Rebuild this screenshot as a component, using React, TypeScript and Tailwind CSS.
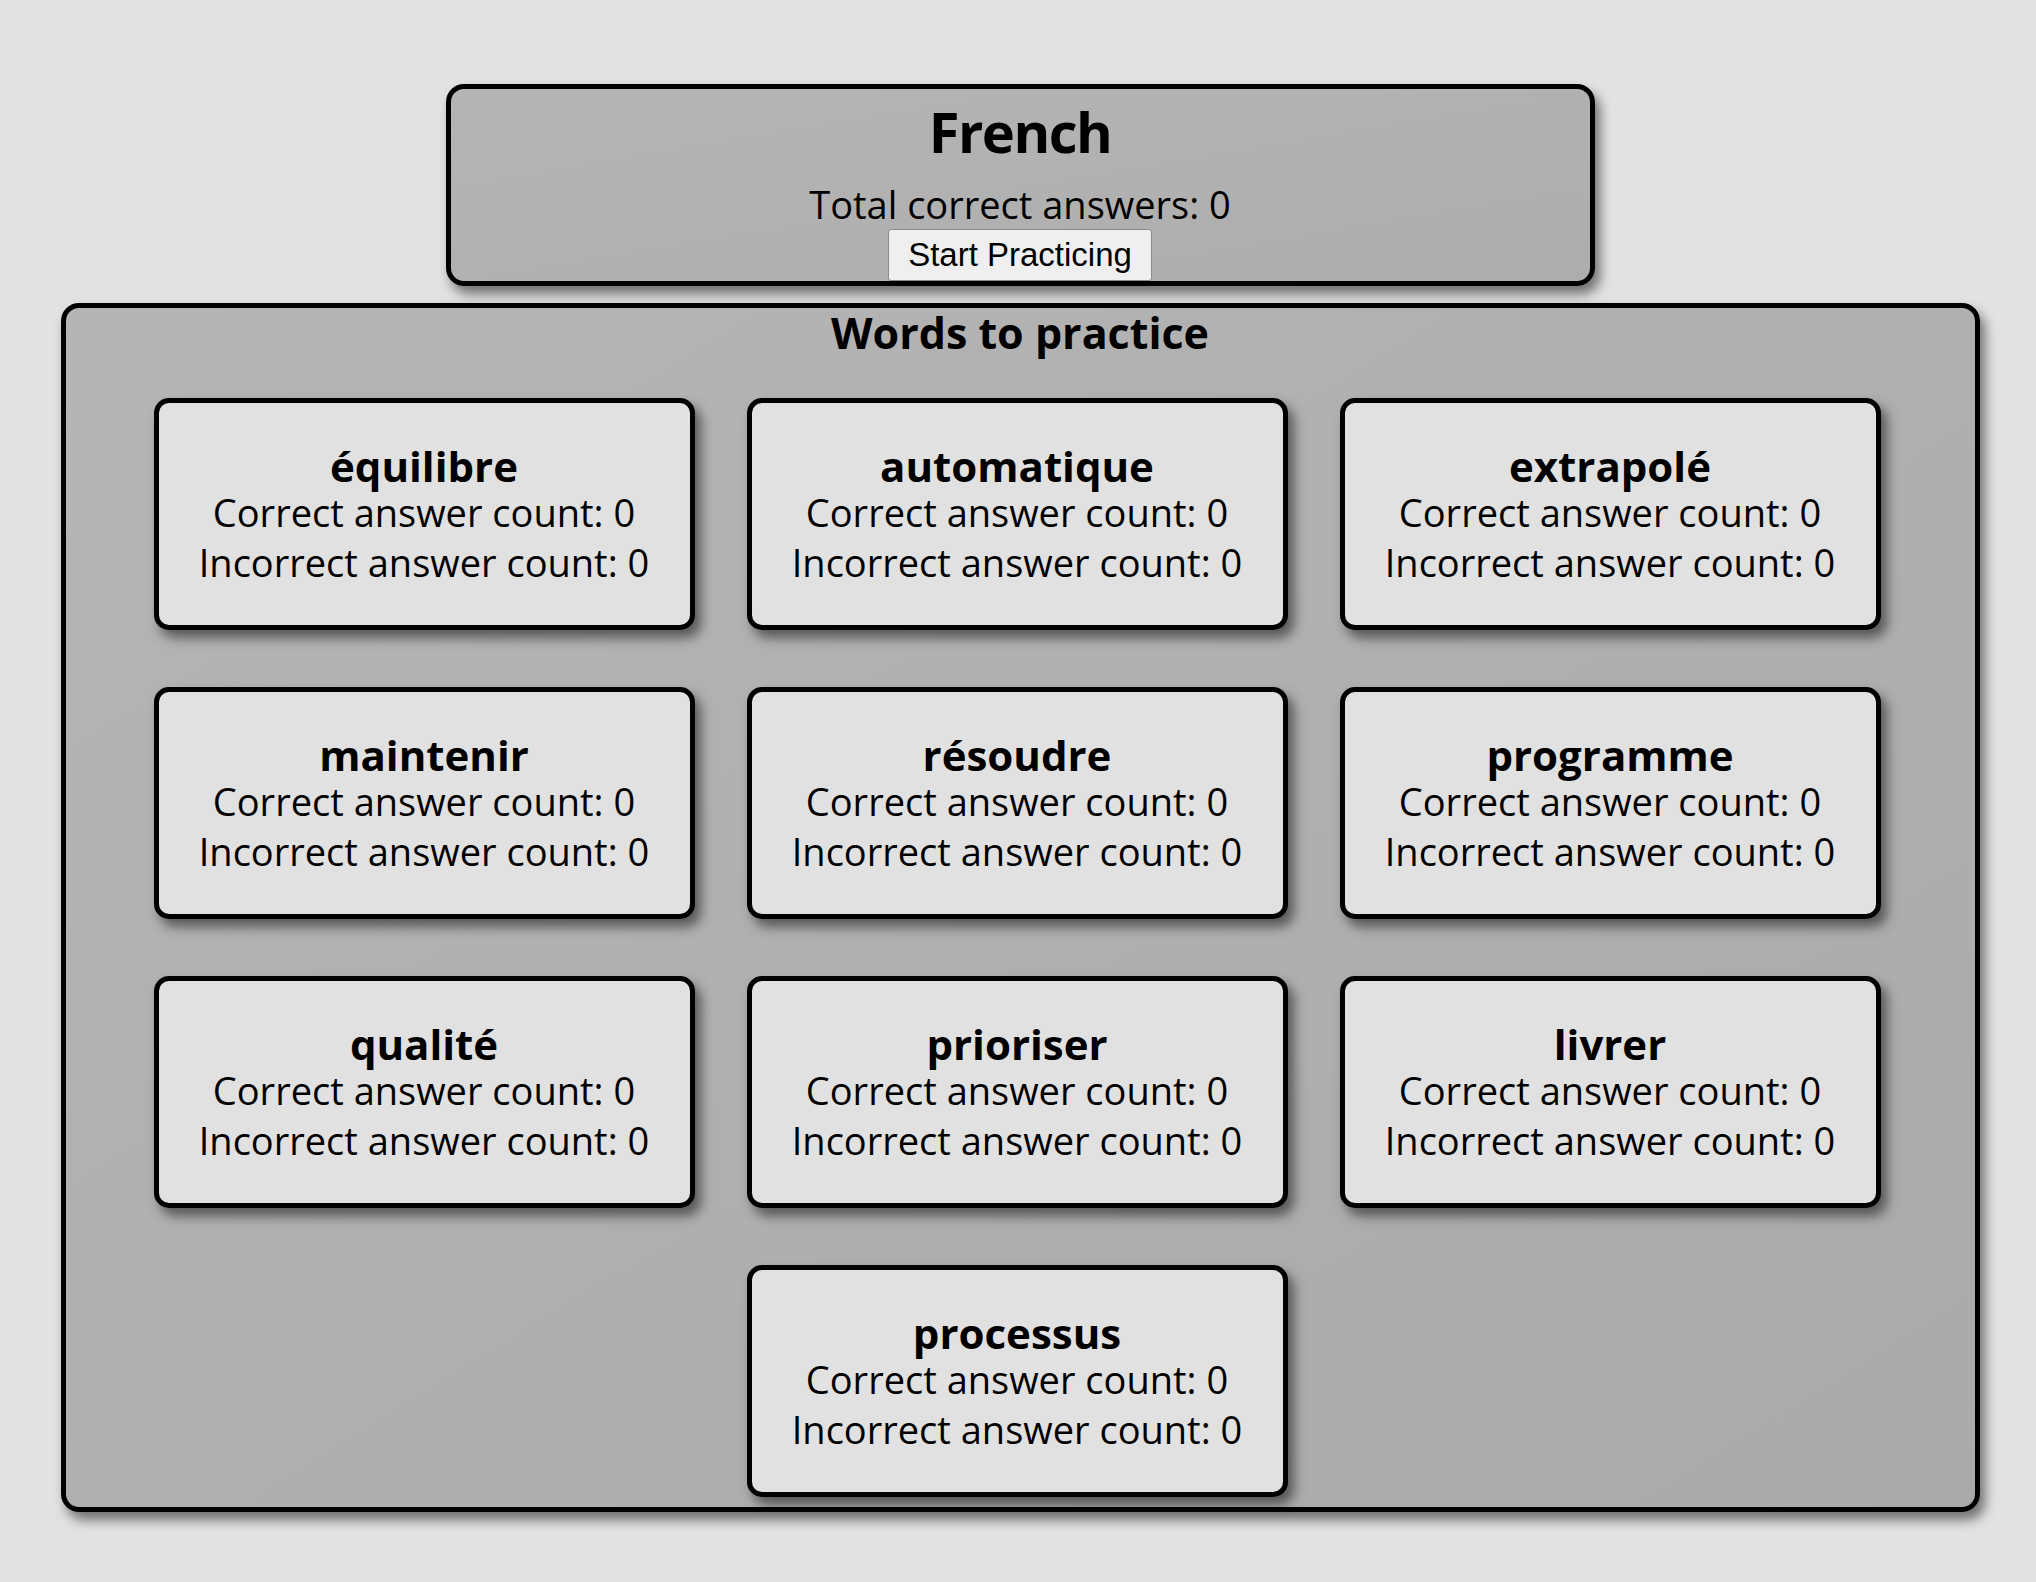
import { useState } from 'react'

type Word = {
  word: string
  correct: number
  incorrect: number
}

const initialWords: Word[] = [
  'équilibre',
  'automatique',
  'extrapolé',
  'maintenir',
  'résoudre',
  'programme',
  'qualité',
  'prioriser',
  'livrer',
  'processus',
].map((word) => ({ word, correct: 0, incorrect: 0 }))

function WordCard({ item }: { item: Word }) {
  return (
    <div className="w-[541px] h-[232px] bg-[#e1e1e1] border-[5px] border-black rounded-[15px] shadow-[6px_8px_12px_rgba(0,0,0,0.5)] pt-[41px] text-center">
      <h3 className="text-[42px] leading-[43px] font-bold">{item.word}</h3>
      <p className="text-[38px] leading-[50px]">Correct answer count: {item.correct}</p>
      <p className="text-[38px] leading-[50px]">Incorrect answer count: {item.incorrect}</p>
    </div>
  )
}

export default function App() {
  const [words] = useState<Word[]>(initialWords)
  const [practicing, setPracticing] = useState(false)

  const totalCorrect = words.reduce((sum, w) => sum + w.correct, 0)

  return (
    <div
      className="min-h-screen bg-[#e2e2e2] text-black pt-[84px] pb-[70px] pl-[4px] flex flex-col items-center"
      style={{ fontFamily: '"Open Sans", "Noto Sans", sans-serif' }}
    >
      {/* header */}
      <div className="w-[1149px] bg-gradient-to-br from-[#b5b5b5] to-[#adadad] border-[5px] border-black rounded-[18px] shadow-[5px_8px_12px_rgba(0,0,0,0.5)] pt-[12px] flex flex-col items-center">
        <h1 className="text-[56px] leading-[60px] font-bold tracking-[-1.5px]">French</h1>
        <p className="mt-[19px] text-[38px] leading-[48px]">Total correct answers: {totalCorrect}</p>
        <button
          onClick={() => setPracticing(!practicing)}
          className="mt-[1px] px-[19px] py-[6px] text-[33px] leading-[38px] bg-[#efefef] border border-[#8a8a8a] rounded-[3px] hover:bg-[#e5e5e5]"
          style={{ fontFamily: '"Liberation Sans", Arial, sans-serif' }}
        >
          {practicing ? 'Stop Practicing' : 'Start Practicing'}
        </button>
      </div>

      {/* words list */}
      <div className="mt-[17px] w-[1919px] bg-gradient-to-br from-[#b5b5b5] to-[#aaaaaa] border-[5px] border-black rounded-[18px] shadow-[5px_8px_12px_rgba(0,0,0,0.5)] pb-[10px]">
        <h2 className="text-center text-[43px] leading-[50px] font-bold">Words to practice</h2>
        <div className="mt-[40px] pr-[6px] flex flex-wrap justify-center gap-x-[52px] gap-y-[57px]">
          {words.map((w) => (
            <WordCard key={w.word} item={w} />
          ))}
        </div>
      </div>
    </div>
  )
}
